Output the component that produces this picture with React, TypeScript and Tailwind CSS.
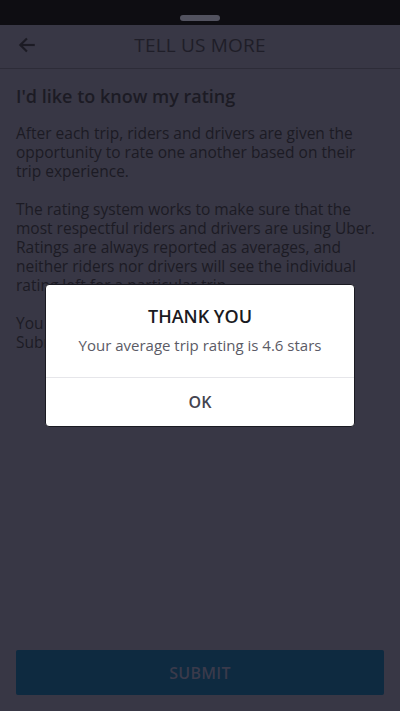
import React from "react";

const font = { fontFamily: '"Open Sans", "Noto Sans", sans-serif' };

function BackArrow() {
  return (
    <svg width="20" height="20" viewBox="0 0 24 24" fill="none" stroke="#1c1b24" strokeWidth="2.6" strokeLinecap="square">
      <path d="M20 12H5" />
      <path d="M11 5l-7 7 7 7" />
    </svg>
  );
}

export default function App() {
  return (
    <div className="relative w-[400px] h-[711px] flex flex-col bg-[#383745] overflow-hidden" style={font}>
      {/* status bar */}
      <div className="h-[25px] bg-[#0e0d12] flex justify-center items-end pb-[4px] shrink-0">
        <div className="w-[40px] h-[6px] rounded-full bg-[#52525f]" />
      </div>

      {/* header */}
      <div className="relative h-[44px] flex items-center justify-center pb-[3px] border-b border-[#2d2c38] shrink-0">
        <div className="absolute left-[17px] top-[10px]">
          <BackArrow />
        </div>
        <span className="text-[19px] text-[#1f1e28] tracking-[0.2px]">TELL US MORE</span>
      </div>

      {/* content */}
      <div className="flex-1 px-4 pt-[15px] text-[#1c1b24]">
        <h2 className="text-[18px] leading-[24px] font-semibold mb-[16px]">I'd like to know my rating</h2>
        <p className="text-[15.5px] leading-[19px] mb-[19px]">
          After each trip, riders and drivers are given the opportunity to rate one another based on their trip experience.
        </p>
        <p className="text-[15.5px] leading-[19px] mb-[19px]">
          The rating system works to make sure that the most respectful riders and drivers are using Uber. Ratings are always reported as averages, and neither riders nor drivers will see the individual rating left for a particular trip.
        </p>
        <p className="text-[15.5px] leading-[19px] whitespace-nowrap">
          You can see your average rating by tapping
          <br />
          Submit below.
        </p>
      </div>

      {/* submit */}
      <div className="px-4 pb-4 shrink-0">
        <button className="w-full h-[45px] rounded-[2px] bg-[#0e2a40] text-[#3a3a4b] text-[16px] font-semibold tracking-[0.3px]">
          SUBMIT
        </button>
      </div>

      {/* dialog */}
      <div className="absolute left-[45px] top-[284px] w-[310px] bg-white rounded-[4px] border border-[#1a1a22] overflow-hidden">
        <div className="flex flex-col items-center pt-[19px] pb-[22px]">
          <div className="text-[18px] leading-[24px] font-semibold text-[#1a1a22]">THANK YOU</div>
          <div className="mt-[7px] text-[15px] leading-[20px] text-[#5b5b66]">Your average trip rating is 4.6 stars</div>
        </div>
        <div className="h-[1px] bg-[#e6e6ea]" />
        <div className="h-[48px] flex items-center justify-center text-[16px] font-semibold text-[#44444f]">OK</div>
      </div>
    </div>
  );
}
